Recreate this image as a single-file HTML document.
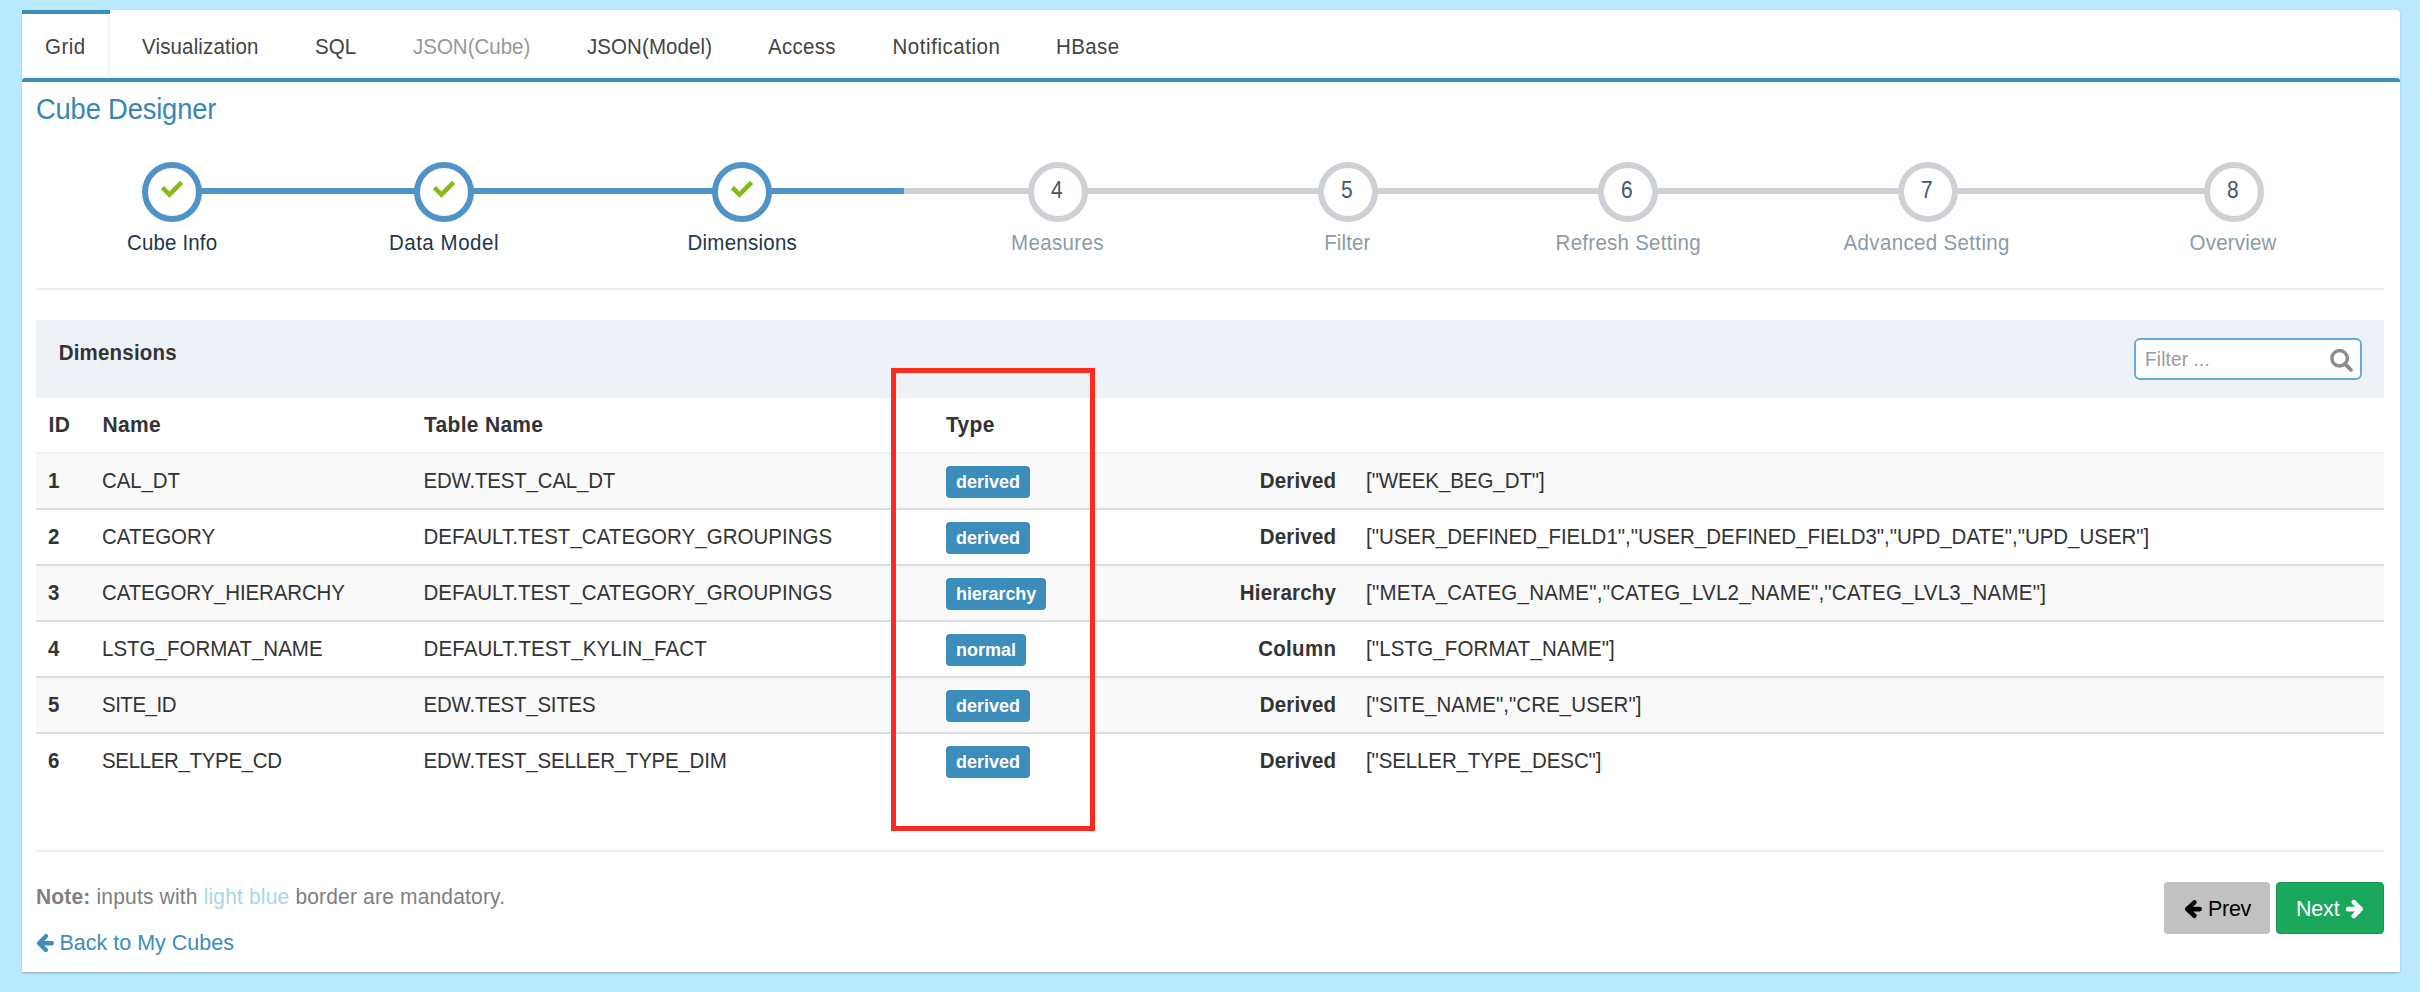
<!DOCTYPE html>
<html><head><meta charset="utf-8"><title>Cube Designer</title>
<style>
html,body{margin:0;padding:0;}
body{width:2420px;height:992px;background:#bae8fd;position:relative;overflow:hidden;font-family:'Liberation Sans', sans-serif;}
.t{position:absolute;white-space:pre;line-height:1;font-family:'Liberation Sans', sans-serif;}
.r{position:absolute;box-sizing:border-box;}
svg{position:absolute;overflow:visible;}
</style></head><body>

<div class="r" style="left:22px;top:10px;width:2378px;height:962px;background:#fff;border-radius:4px 4px 0 0;box-shadow:0 1px 2px rgba(0,0,0,0.18),0 3px 3px -2px rgba(0,0,0,0.12);"></div>
<div class="r" style="left:22px;top:10px;width:88px;height:4px;background:#3c8dbc;"></div>
<div class="r" style="left:108px;top:15px;width:2292px;height:63px;border-left:2px solid #f5f5f5;border-bottom:2px solid #f4f0ef;border-radius:4px 0 0 4px;"></div>
<div class="r" style="left:22px;top:76px;width:88px;height:2px;background:#f7f3f2;"></div>
<div class="r" style="left:22px;top:78px;width:2378px;height:4px;background:#3c8dbc;border-radius:3px 3px 0 0;"></div>
<div class="t" style="left:45px;top:37px;font-size:20.5px;font-weight:normal;color:#444;letter-spacing:0.5px;transform:scaleY(1.05);transform-origin:50% 17px;">Grid</div>
<div class="t" style="left:142px;top:37px;font-size:20.5px;font-weight:normal;color:#444;letter-spacing:0.15px;transform:scaleY(1.05);transform-origin:50% 17px;">Visualization</div>
<div class="t" style="left:315px;top:37px;font-size:20.5px;font-weight:normal;color:#444;letter-spacing:0.1px;transform:scaleY(1.05);transform-origin:50% 17px;">SQL</div>
<div class="t" style="left:413px;top:37px;font-size:20.5px;font-weight:normal;color:#999;letter-spacing:0px;transform:scaleY(1.05);transform-origin:50% 17px;">JSON(Cube)</div>
<div class="t" style="left:587px;top:37px;font-size:20.5px;font-weight:normal;color:#444;letter-spacing:0.08px;transform:scaleY(1.05);transform-origin:50% 17px;">JSON(Model)</div>
<div class="t" style="left:768px;top:37px;font-size:20.5px;font-weight:normal;color:#444;letter-spacing:0.3px;transform:scaleY(1.05);transform-origin:50% 17px;">Access</div>
<div class="t" style="left:892.5px;top:37px;font-size:20.5px;font-weight:normal;color:#444;letter-spacing:0.55px;transform:scaleY(1.05);transform-origin:50% 17px;">Notification</div>
<div class="t" style="left:1056px;top:37px;font-size:20.5px;font-weight:normal;color:#444;letter-spacing:0.4px;transform:scaleY(1.05);transform-origin:50% 17px;">HBase</div>
<div class="t" style="left:36px;top:96px;font-size:27.3px;font-weight:normal;color:#3786b6;letter-spacing:-0.15px;transform:scaleY(1.05);transform-origin:50% 22px;">Cube Designer</div>
<div class="r" style="left:172px;top:188px;width:732px;height:6px;background:#5093c7;"></div>
<div class="r" style="left:904px;top:188px;width:1330px;height:6px;background:#cdd1d6;"></div>
<div class="r" style="left:142px;top:162px;width:60px;height:60px;background:#fff;border-radius:50%;border:6px solid #5093c7;"></div>
<svg style="left:158px;top:178px" width="28" height="28" viewBox="0 0 28 28"><polygon points="5.9,8.2 3.1,11.2 11.5,19.6 24.9,6.1 22,3.1 11.5,13.7" fill="#86b81f" stroke="#86b81f" stroke-width="0.6" stroke-linejoin="round"/></svg>
<div class="t" style="left:-127.92500000000001px;width:600px;text-align:center;top:233px;font-size:20.5px;font-weight:normal;color:#23374e;letter-spacing:0.15px;transform:scaleY(1.05);transform-origin:50% 17px;">Cube Info</div>
<div class="r" style="left:414px;top:162px;width:60px;height:60px;background:#fff;border-radius:50%;border:6px solid #5093c7;"></div>
<svg style="left:430px;top:178px" width="28" height="28" viewBox="0 0 28 28"><polygon points="5.9,8.2 3.1,11.2 11.5,19.6 24.9,6.1 22,3.1 11.5,13.7" fill="#86b81f" stroke="#86b81f" stroke-width="0.6" stroke-linejoin="round"/></svg>
<div class="t" style="left:143.96499999999997px;width:600px;text-align:center;top:233px;font-size:20.5px;font-weight:normal;color:#23374e;letter-spacing:0.53px;transform:scaleY(1.05);transform-origin:50% 17px;">Data Model</div>
<div class="r" style="left:712px;top:162px;width:60px;height:60px;background:#fff;border-radius:50%;border:6px solid #5093c7;"></div>
<svg style="left:728px;top:178px" width="28" height="28" viewBox="0 0 28 28"><polygon points="5.9,8.2 3.1,11.2 11.5,19.6 24.9,6.1 22,3.1 11.5,13.7" fill="#86b81f" stroke="#86b81f" stroke-width="0.6" stroke-linejoin="round"/></svg>
<div class="t" style="left:442.32500000000005px;width:600px;text-align:center;top:233px;font-size:20.5px;font-weight:normal;color:#23374e;letter-spacing:0.25px;transform:scaleY(1.05);transform-origin:50% 17px;">Dimensions</div>
<div class="r" style="left:1028px;top:162px;width:60px;height:60px;background:#fff;border-radius:50%;border:6px solid #cdd1d6;"></div>
<div class="t" style="left:756.8px;width:600px;text-align:center;top:180px;font-size:21px;font-weight:normal;color:#46566a;transform:scaleY(1.12);transform-origin:50% 18px;">4</div>
<div class="t" style="left:757.4749999999999px;width:600px;text-align:center;top:233px;font-size:20.5px;font-weight:normal;color:#8c9ba6;letter-spacing:0.35px;transform:scaleY(1.05);transform-origin:50% 17px;">Measures</div>
<div class="r" style="left:1318px;top:162px;width:60px;height:60px;background:#fff;border-radius:50%;border:6px solid #cdd1d6;"></div>
<div class="t" style="left:1046.8px;width:600px;text-align:center;top:180px;font-size:21px;font-weight:normal;color:#46566a;transform:scaleY(1.12);transform-origin:50% 18px;">5</div>
<div class="t" style="left:1047.375px;width:600px;text-align:center;top:233px;font-size:20.5px;font-weight:normal;color:#8c9ba6;letter-spacing:0.15px;transform:scaleY(1.05);transform-origin:50% 17px;">Filter</div>
<div class="r" style="left:1598px;top:162px;width:60px;height:60px;background:#fff;border-radius:50%;border:6px solid #cdd1d6;"></div>
<div class="t" style="left:1326.8px;width:600px;text-align:center;top:180px;font-size:21px;font-weight:normal;color:#46566a;transform:scaleY(1.12);transform-origin:50% 18px;">6</div>
<div class="t" style="left:1328.23px;width:600px;text-align:center;top:233px;font-size:20.5px;font-weight:normal;color:#8c9ba6;letter-spacing:0.26px;transform:scaleY(1.05);transform-origin:50% 17px;">Refresh Setting</div>
<div class="r" style="left:1898px;top:162px;width:60px;height:60px;background:#fff;border-radius:50%;border:6px solid #cdd1d6;"></div>
<div class="t" style="left:1626.8px;width:600px;text-align:center;top:180px;font-size:21px;font-weight:normal;color:#46566a;transform:scaleY(1.12);transform-origin:50% 18px;">7</div>
<div class="t" style="left:1626.675px;width:600px;text-align:center;top:233px;font-size:20.5px;font-weight:normal;color:#8c9ba6;letter-spacing:0.35px;transform:scaleY(1.05);transform-origin:50% 17px;">Advanced Setting</div>
<div class="r" style="left:2204px;top:162px;width:60px;height:60px;background:#fff;border-radius:50%;border:6px solid #cdd1d6;"></div>
<div class="t" style="left:1932.8000000000002px;width:600px;text-align:center;top:180px;font-size:21px;font-weight:normal;color:#46566a;transform:scaleY(1.12);transform-origin:50% 18px;">8</div>
<div class="t" style="left:1933.0949999999998px;width:600px;text-align:center;top:233px;font-size:20.5px;font-weight:normal;color:#8c9ba6;letter-spacing:0.19px;transform:scaleY(1.05);transform-origin:50% 17px;">Overview</div>
<div class="r" style="left:36px;top:288px;width:2348px;height:2px;background:#eee;"></div>
<div class="r" style="left:36px;top:320px;width:2348px;height:78px;background:#eef2f7;"></div>
<div class="t" style="left:58.7px;top:343px;font-size:20.5px;font-weight:bold;color:#333;letter-spacing:0.2px;transform:scaleY(1.05);transform-origin:50% 17px;">Dimensions</div>
<div class="r" style="left:2134px;top:338px;width:228px;height:42px;background:#fff;border:2px solid #63acde;border-radius:6px;"></div>
<div class="t" style="left:2145px;top:350px;font-size:19px;font-weight:normal;color:#999;letter-spacing:0.15px;transform:scaleY(1.05);transform-origin:50% 16px;">Filter ...</div>
<svg style="left:2328px;top:347px" width="26" height="26" viewBox="0 0 26 26"><circle cx="11.6" cy="11.35" r="7.75" fill="none" stroke="#8c8c8c" stroke-width="3.5"/><line x1="17" y1="16.8" x2="23" y2="22.8" stroke="#8c8c8c" stroke-width="3.8" stroke-linecap="round"/></svg>
<div class="t" style="left:48.5px;top:414px;font-size:21px;font-weight:bold;color:#333;letter-spacing:0.3px;transform:scaleY(1.05);transform-origin:50% 18px;">ID</div>
<div class="t" style="left:102.5px;top:414px;font-size:21px;font-weight:bold;color:#333;letter-spacing:0.3px;transform:scaleY(1.05);transform-origin:50% 18px;">Name</div>
<div class="t" style="left:424px;top:414px;font-size:21px;font-weight:bold;color:#333;letter-spacing:0.3px;transform:scaleY(1.05);transform-origin:50% 18px;">Table Name</div>
<div class="t" style="left:946px;top:414px;font-size:21px;font-weight:bold;color:#333;letter-spacing:0.3px;transform:scaleY(1.05);transform-origin:50% 18px;">Type</div>
<div class="r" style="left:36px;top:452px;width:2348px;height:56px;background:#f9f9f9;"></div>
<div class="r" style="left:36px;top:564px;width:2348px;height:56px;background:#f9f9f9;"></div>
<div class="r" style="left:36px;top:676px;width:2348px;height:56px;background:#f9f9f9;"></div>
<div class="r" style="left:36px;top:452px;width:2348px;height:2px;background:#f2f2f2;"></div>
<div class="r" style="left:36px;top:508px;width:2348px;height:2px;background:#ddd;"></div>
<div class="r" style="left:36px;top:564px;width:2348px;height:2px;background:#ddd;"></div>
<div class="r" style="left:36px;top:620px;width:2348px;height:2px;background:#ddd;"></div>
<div class="r" style="left:36px;top:676px;width:2348px;height:2px;background:#ddd;"></div>
<div class="r" style="left:36px;top:732px;width:2348px;height:2px;background:#ddd;"></div>
<div class="t" style="left:48px;top:471px;font-size:20.5px;font-weight:bold;color:#333;transform:scaleY(1.05);transform-origin:50% 17px;">1</div>
<div class="t" style="left:102px;top:471px;font-size:20.5px;font-weight:normal;color:#333;letter-spacing:-0.14px;transform:scaleY(1.05);transform-origin:50% 17px;">CAL_DT</div>
<div class="t" style="left:423.5px;top:471px;font-size:20.5px;font-weight:normal;color:#333;letter-spacing:-0.21px;transform:scaleY(1.05);transform-origin:50% 17px;">EDW.TEST_CAL_DT</div>
<div class="r" style="left:946px;top:466px;width:84px;height:32px;background:#3c8dbc;border-radius:4px;"></div>
<div class="t" style="left:956px;top:473px;font-size:18px;font-weight:bold;color:#fff;letter-spacing:0px;transform:scaleY(1.05);transform-origin:50% 15px;">derived</div>
<div class="t" style="left:736.1800000000001px;width:600px;text-align:right;top:471px;font-size:20.5px;font-weight:bold;color:#333;letter-spacing:0.18px;transform:scaleY(1.05);transform-origin:50% 17px;">Derived</div>
<div class="t" style="left:1366px;top:471px;font-size:20.5px;font-weight:normal;color:#333;letter-spacing:-0.07px;transform:scaleY(1.05);transform-origin:50% 17px;">["WEEK_BEG_DT"]</div>
<div class="t" style="left:48px;top:527px;font-size:20.5px;font-weight:bold;color:#333;transform:scaleY(1.05);transform-origin:50% 17px;">2</div>
<div class="t" style="left:102px;top:527px;font-size:20.5px;font-weight:normal;color:#333;letter-spacing:0px;transform:scaleY(1.05);transform-origin:50% 17px;">CATEGORY</div>
<div class="t" style="left:423.5px;top:527px;font-size:20.5px;font-weight:normal;color:#333;letter-spacing:0.03px;transform:scaleY(1.05);transform-origin:50% 17px;">DEFAULT.TEST_CATEGORY_GROUPINGS</div>
<div class="r" style="left:946px;top:522px;width:84px;height:32px;background:#3c8dbc;border-radius:4px;"></div>
<div class="t" style="left:956px;top:529px;font-size:18px;font-weight:bold;color:#fff;letter-spacing:0px;transform:scaleY(1.05);transform-origin:50% 15px;">derived</div>
<div class="t" style="left:736.1800000000001px;width:600px;text-align:right;top:527px;font-size:20.5px;font-weight:bold;color:#333;letter-spacing:0.18px;transform:scaleY(1.05);transform-origin:50% 17px;">Derived</div>
<div class="t" style="left:1366px;top:527px;font-size:20.5px;font-weight:normal;color:#333;letter-spacing:-0.02px;transform:scaleY(1.05);transform-origin:50% 17px;">["USER_DEFINED_FIELD1","USER_DEFINED_FIELD3","UPD_DATE","UPD_USER"]</div>
<div class="t" style="left:48px;top:583px;font-size:20.5px;font-weight:bold;color:#333;transform:scaleY(1.05);transform-origin:50% 17px;">3</div>
<div class="t" style="left:102px;top:583px;font-size:20.5px;font-weight:normal;color:#333;letter-spacing:-0.14px;transform:scaleY(1.05);transform-origin:50% 17px;">CATEGORY_HIERARCHY</div>
<div class="t" style="left:423.5px;top:583px;font-size:20.5px;font-weight:normal;color:#333;letter-spacing:0.03px;transform:scaleY(1.05);transform-origin:50% 17px;">DEFAULT.TEST_CATEGORY_GROUPINGS</div>
<div class="r" style="left:946px;top:578px;width:100px;height:32px;background:#3c8dbc;border-radius:4px;"></div>
<div class="t" style="left:956px;top:585px;font-size:18px;font-weight:bold;color:#fff;letter-spacing:-0.1px;transform:scaleY(1.05);transform-origin:50% 15px;">hierarchy</div>
<div class="t" style="left:736.2px;width:600px;text-align:right;top:583px;font-size:20.5px;font-weight:bold;color:#333;letter-spacing:0.2px;transform:scaleY(1.05);transform-origin:50% 17px;">Hierarchy</div>
<div class="t" style="left:1366px;top:583px;font-size:20.5px;font-weight:normal;color:#333;letter-spacing:0.22px;transform:scaleY(1.05);transform-origin:50% 17px;">["META_CATEG_NAME","CATEG_LVL2_NAME","CATEG_LVL3_NAME"]</div>
<div class="t" style="left:48px;top:639px;font-size:20.5px;font-weight:bold;color:#333;transform:scaleY(1.05);transform-origin:50% 17px;">4</div>
<div class="t" style="left:102px;top:639px;font-size:20.5px;font-weight:normal;color:#333;letter-spacing:0px;transform:scaleY(1.05);transform-origin:50% 17px;">LSTG_FORMAT_NAME</div>
<div class="t" style="left:423.5px;top:639px;font-size:20.5px;font-weight:normal;color:#333;letter-spacing:0.1px;transform:scaleY(1.05);transform-origin:50% 17px;">DEFAULT.TEST_KYLIN_FACT</div>
<div class="r" style="left:946px;top:634px;width:80px;height:32px;background:#3c8dbc;border-radius:4px;"></div>
<div class="t" style="left:956px;top:641px;font-size:18px;font-weight:bold;color:#fff;letter-spacing:0px;transform:scaleY(1.05);transform-origin:50% 15px;">normal</div>
<div class="t" style="left:736.3px;width:600px;text-align:right;top:639px;font-size:20.5px;font-weight:bold;color:#333;letter-spacing:0.3px;transform:scaleY(1.05);transform-origin:50% 17px;">Column</div>
<div class="t" style="left:1366px;top:639px;font-size:20.5px;font-weight:normal;color:#333;letter-spacing:0.12px;transform:scaleY(1.05);transform-origin:50% 17px;">["LSTG_FORMAT_NAME"]</div>
<div class="t" style="left:48px;top:695px;font-size:20.5px;font-weight:bold;color:#333;transform:scaleY(1.05);transform-origin:50% 17px;">5</div>
<div class="t" style="left:102px;top:695px;font-size:20.5px;font-weight:normal;color:#333;letter-spacing:-0.5px;transform:scaleY(1.05);transform-origin:50% 17px;">SITE_ID</div>
<div class="t" style="left:423.5px;top:695px;font-size:20.5px;font-weight:normal;color:#333;letter-spacing:-0.25px;transform:scaleY(1.05);transform-origin:50% 17px;">EDW.TEST_SITES</div>
<div class="r" style="left:946px;top:690px;width:84px;height:32px;background:#3c8dbc;border-radius:4px;"></div>
<div class="t" style="left:956px;top:697px;font-size:18px;font-weight:bold;color:#fff;letter-spacing:0px;transform:scaleY(1.05);transform-origin:50% 15px;">derived</div>
<div class="t" style="left:736.1800000000001px;width:600px;text-align:right;top:695px;font-size:20.5px;font-weight:bold;color:#333;letter-spacing:0.18px;transform:scaleY(1.05);transform-origin:50% 17px;">Derived</div>
<div class="t" style="left:1366px;top:695px;font-size:20.5px;font-weight:normal;color:#333;letter-spacing:0.065px;transform:scaleY(1.05);transform-origin:50% 17px;">["SITE_NAME","CRE_USER"]</div>
<div class="t" style="left:48px;top:751px;font-size:20.5px;font-weight:bold;color:#333;transform:scaleY(1.05);transform-origin:50% 17px;">6</div>
<div class="t" style="left:102px;top:751px;font-size:20.5px;font-weight:normal;color:#333;letter-spacing:-0.35px;transform:scaleY(1.05);transform-origin:50% 17px;">SELLER_TYPE_CD</div>
<div class="t" style="left:423.5px;top:751px;font-size:20.5px;font-weight:normal;color:#333;letter-spacing:-0.24px;transform:scaleY(1.05);transform-origin:50% 17px;">EDW.TEST_SELLER_TYPE_DIM</div>
<div class="r" style="left:946px;top:746px;width:84px;height:32px;background:#3c8dbc;border-radius:4px;"></div>
<div class="t" style="left:956px;top:753px;font-size:18px;font-weight:bold;color:#fff;letter-spacing:0px;transform:scaleY(1.05);transform-origin:50% 15px;">derived</div>
<div class="t" style="left:736.1800000000001px;width:600px;text-align:right;top:751px;font-size:20.5px;font-weight:bold;color:#333;letter-spacing:0.18px;transform:scaleY(1.05);transform-origin:50% 17px;">Derived</div>
<div class="t" style="left:1366px;top:751px;font-size:20.5px;font-weight:normal;color:#333;letter-spacing:-0.13px;transform:scaleY(1.05);transform-origin:50% 17px;">["SELLER_TYPE_DESC"]</div>
<div class="r" style="left:891px;top:368px;width:204px;height:463px;border:5px solid #fe2a1c;"></div>
<div class="r" style="left:36px;top:850px;width:2348px;height:2px;background:#eee;"></div>
<div class="t" style="left:36px;top:886px;font-size:21px;letter-spacing:0.17px;color:#808080;transform:scaleY(1.05);transform-origin:0 18px;"><b>Note:</b> inputs with <span style="color:#a9d6e9">light blue</span> border are mandatory.</div>
<svg style="left:30px;top:925px" width="30" height="30" viewBox="0 0 30 30"><path d="M15.9 11.2 L9.1 18.2 L15.9 25 M9.5 18.2 H21.8" fill="none" stroke="#3c8dbc" stroke-width="4.4" stroke-linecap="round" stroke-linejoin="round"/></svg>
<div class="t" style="left:59.5px;top:933px;font-size:21.5px;font-weight:normal;color:#3c8dbc;transform:scaleY(1.05);transform-origin:50% 17px;">Back to My Cubes</div>
<div class="r" style="left:2164px;top:882px;width:106px;height:52px;background:#c1c1c1;border-radius:4px;"></div>
<svg style="left:2180px;top:895px" width="28" height="28" viewBox="0 0 28 28"><path d="M14.4 7.4 L7.2 14.1 L14.4 20.8 M7.5 14.1 H19.7" fill="none" stroke="#000" stroke-width="4.6" stroke-linecap="round" stroke-linejoin="round"/></svg>
<div class="t" style="left:2208px;top:899px;font-size:21.5px;font-weight:normal;color:#000;letter-spacing:-0.3px;transform:scaleY(1.05);transform-origin:50% 17px;">Prev</div>
<div class="r" style="left:2276px;top:882px;width:108px;height:52px;background:#1ba85d;border:1px solid #169650;border-radius:4px;"></div>
<div class="t" style="left:2296px;top:899px;font-size:21.5px;font-weight:normal;color:#fff;letter-spacing:-0.2px;transform:scaleY(1.05);transform-origin:50% 17px;">Next</div>
<svg style="left:2340px;top:895px" width="28" height="28" viewBox="0 0 28 28"><path d="M13.7 7.2 L20.7 14.15 L13.7 21.1 M20.4 14.15 H8.1" fill="none" stroke="#fff" stroke-width="4.6" stroke-linecap="round" stroke-linejoin="round"/></svg>
</body></html>
